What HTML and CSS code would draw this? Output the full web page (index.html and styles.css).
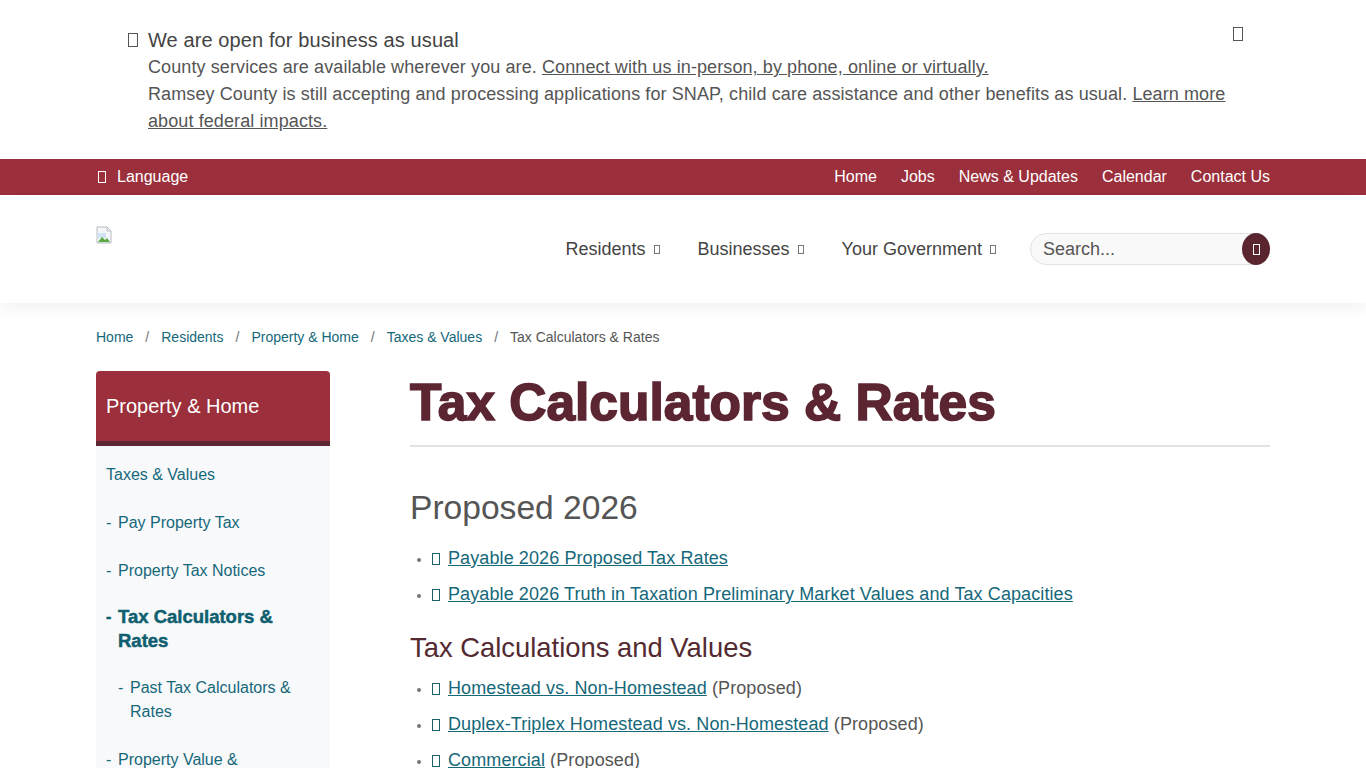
FILE: index.html
```html
<!DOCTYPE html>
<html lang="en">
<head>
  <meta charset="UTF-8">
  <meta name="viewport" content="width=device-width, initial-scale=1.0">
  <title>Tax Calculators &amp; Rates | Ramsey County</title>
  <link rel="stylesheet" href="styles.css">
</head>
<body>
  <div class="notice">
    <div class="container notice-inner">
      <span class="tofu notice-icon"></span>
      <div class="notice-body">
        <p class="notice-title">We are open for business as usual</p>
        <p>County services are available wherever you are. <a href="#">Connect with us in-person, by phone, online or virtually.</a></p>
        <p>Ramsey County is still accepting and processing applications for SNAP, child care assistance and other benefits as usual. <a href="#">Learn more about federal impacts.</a></p>
      </div>
      <button class="notice-close" type="button"><span class="tofu"></span></button>
    </div>
  </div>

  <div class="utility-bar">
    <div class="container utility-inner">
      <a class="lang" href="#"><span class="tofu"></span>Language</a>
      <nav class="utility-links">
        <a href="#">Home</a>
        <a href="#">Jobs</a>
        <a href="#">News &amp; Updates</a>
        <a href="#">Calendar</a>
        <a href="#">Contact Us</a>
      </nav>
    </div>
  </div>

  <header class="site-header">
    <div class="container header-inner">
      <a class="logo" href="#">
        <!-- broken image placeholder -->
        <svg width="16" height="18" viewBox="0 0 16 18">
          <path d="M1 1h10l4 4v12H1z" fill="#f4f6f8" stroke="#b8bcc2"/>
          <path d="M11 1v4h4" fill="none" stroke="#b8bcc2"/>
          <path d="M2 7h8v5H2z" fill="#cfe3f5"/>
          <path d="M2 16l4-5 3 3 2-2 3 4z" fill="#5aa845"/>
        </svg>
      </a>
      <nav class="main-nav">
        <a href="#">Residents <span class="tofu caret"></span></a>
        <a href="#">Businesses <span class="tofu caret"></span></a>
        <a href="#">Your Government <span class="tofu caret"></span></a>
      </nav>
      <form class="search">
        <input type="text" placeholder="Search...">
        <button type="button"><span class="tofu"></span></button>
      </form>
    </div>
  </header>

  <div class="container">
    <ol class="breadcrumb">
      <li><a href="#">Home</a></li>
      <li><a href="#">Residents</a></li>
      <li><a href="#">Property &amp; Home</a></li>
      <li><a href="#">Taxes &amp; Values</a></li>
      <li class="current">Tax Calculators &amp; Rates</li>
    </ol>

    <div class="layout">
      <aside class="sidenav">
        <h2 class="sidenav-title">Property &amp; Home</h2>
        <ul class="sidenav-list">
          <li><a href="#">Taxes &amp; Values</a></li>
          <li><a class="lvl1" href="#"><span class="dash">-</span>Pay Property Tax</a></li>
          <li><a class="lvl1" href="#"><span class="dash">-</span>Property Tax Notices</a></li>
          <li><a class="lvl1 active" href="#"><span class="dash">-</span>Tax Calculators &amp; Rates</a></li>
          <li><a class="lvl2" href="#"><span class="dash">-</span>Past Tax Calculators &amp; Rates</a></li>
          <li><a class="lvl1" href="#"><span class="dash">-</span>Property Value &amp; Classification</a></li>
        </ul>
      </aside>

      <main class="content">
        <h1>Tax Calculators &amp; Rates</h1>

        <h2>Proposed 2026</h2>
        <ul class="doc-list">
          <li><span class="tofu"></span><a href="#">Payable 2026 Proposed Tax Rates</a></li>
          <li><span class="tofu"></span><a href="#">Payable 2026 Truth in Taxation Preliminary Market Values and Tax Capacities</a></li>
        </ul>

        <h3>Tax Calculations and Values</h3>
        <ul class="doc-list">
          <li><span class="tofu"></span><a href="#">Homestead vs. Non-Homestead</a> (Proposed)</li>
          <li><span class="tofu"></span><a href="#">Duplex-Triplex Homestead vs. Non-Homestead</a> (Proposed)</li>
          <li><span class="tofu"></span><a href="#">Commercial</a> (Proposed)</li>
          <li><span class="tofu"></span><a href="#">Apartment</a> (Proposed)</li>
        </ul>
      </main>
    </div>
  </div>
</body>
</html>
```

FILE: styles.css
```css
body {
  margin: 0;
  font-family: "Liberation Sans", Arial, sans-serif;
  font-size: 18px;
  color: #444;
  background: #fff;
}
a {
  color: #15687a;
}
.container {
  max-width: 1174px;
  margin: 0 auto;
}
.tofu {
  display: inline-block;
  width: 8px;
  height: 12px;
  border: 1px solid currentColor;
  box-sizing: border-box;
}

/* notice banner */
.notice {
  padding: 27px 0 24px;
}
.notice-inner {
  display: flex;
  gap: 10px;
  padding: 0 40px 0 32px;
  position: relative;
  box-sizing: border-box;
}
.notice-icon {
  flex: 0 0 auto;
  width: 10px;
  height: 14px;
  margin-top: 6px;
  color: #555;
}
.notice-body p {
  margin: 0;
  line-height: 27px;
  color: #555;
  letter-spacing: 0.1px;
}
.notice-body .notice-title {
  font-size: 20px;
  color: #444;
}
.notice-body a {
  color: #555;
}
.notice-close {
  position: absolute;
  right: 27px;
  top: 0;
  padding: 0;
  border: 0;
  background: none;
  color: #555;
}
.notice-close .tofu {
  width: 10px;
  height: 14px;
  display: block;
}

/* red utility bar */
.utility-bar {
  background: #9b2f3b;
}
.utility-inner {
  display: flex;
  justify-content: space-between;
  align-items: center;
  height: 36px;
  font-size: 16px;
}
.utility-inner a {
  color: #fff;
  text-decoration: none;
}
.lang {
  display: flex;
  align-items: center;
  gap: 11px;
  padding-left: 2px;
}
.utility-links {
  display: flex;
  gap: 24px;
}

/* header */
.site-header {
  position: relative;
  box-shadow: 0 6px 14px rgba(0, 0, 0, 0.05);
}
.header-inner {
  display: flex;
  align-items: center;
  height: 108px;
}
.logo {
  align-self: flex-start;
  margin-top: 31px;
  line-height: 0;
}
.main-nav {
  display: flex;
  gap: 38px;
  margin-left: auto;
}
.main-nav a {
  color: #444;
  text-decoration: none;
  display: flex;
  align-items: center;
}
.caret {
  width: 6px;
  height: 9px;
  margin-left: 8px;
  color: #777;
}
.search {
  position: relative;
  width: 240px;
  margin-left: 34px;
}
.search input {
  width: 100%;
  height: 32px;
  box-sizing: border-box;
  padding: 0 34px 0 12px;
  border: 1px solid #e2e2e2;
  border-radius: 16px;
  background: #f9f9f9;
  font-family: inherit;
  font-size: 18px;
  color: #444;
}
.search input::placeholder {
  color: #555;
}
.search button {
  position: absolute;
  right: 0;
  top: 0;
  width: 28px;
  height: 32px;
  border: 0;
  border-radius: 50%;
  background: #5b2530;
  color: #fff;
  display: flex;
  align-items: center;
  justify-content: center;
  padding: 0;
}
.search button .tofu {
  width: 7px;
  height: 11px;
}

/* breadcrumb */
.breadcrumb {
  display: flex;
  list-style: none;
  margin: 24px 0;
  padding: 0;
  font-size: 14px;
  line-height: 20px;
}
.breadcrumb a {
  text-decoration: none;
}
.breadcrumb li + li::before {
  content: "/";
  color: #6c757d;
  margin: 0 12px;
}
.breadcrumb .current {
  color: #555;
}

/* two columns */
.layout {
  display: grid;
  grid-template-columns: 234px 1fr;
  column-gap: 80px;
}

/* side navigation */
.sidenav-title {
  margin: 0;
  height: 70px;
  line-height: 70px;
  padding: 0 10px;
  background: #9b2f3b;
  border-bottom: 5px solid #5c2833;
  border-radius: 4px 4px 0 0;
  color: #fff;
  font-size: 20px;
  font-weight: normal;
}
.sidenav-list {
  list-style: none;
  margin: 0;
  padding: 5px 0 0;
  background: #f8f9fa;
  min-height: 400px;
}
.sidenav-list a {
  display: flex;
  padding: 12px 10px;
  font-size: 16px;
  line-height: 24px;
  text-decoration: none;
}
.sidenav-list .dash {
  flex: 0 0 12px;
}
.sidenav-list .lvl2 {
  padding-left: 22px;
  padding-top: 11px;
}
.sidenav-list .active {
  font-weight: bold;
  font-size: 18.5px;
  color: #0f5f70;
  -webkit-text-stroke: 0.5px #0f5f70;
  padding-top: 10px;
}
.sidenav-list .active .dash {
  flex-basis: 12px;
  font-size: 16px;
}

/* page content */
.content h1 {
  margin: 0;
  padding-bottom: 12px;
  border-bottom: 2px solid #e3e3e3;
  font-size: 51.5px;
  line-height: 62px;
  color: #5b2532;
  -webkit-text-stroke: 1.6px #5b2532;
}
.content h2 {
  margin: 40px 0 17px;
  font-size: 33.6px;
  line-height: 41px;
  font-weight: normal;
  color: #555;
}
.content h3 {
  margin: 24px 0 11px;
  font-size: 27.4px;
  line-height: 32px;
  font-weight: normal;
  color: #532a31;
}
.doc-list {
  margin: 0;
  padding-left: 22px;
  color: #555;
}
.doc-list li {
  line-height: 27px;
  margin-bottom: 9px;
  letter-spacing: 0.1px;
}
.doc-list li::marker {
  color: #777;
  font-size: 14px;
}
.doc-list .tofu {
  color: #1f5f6a;
  margin-right: 8px;
  vertical-align: -1px;
}
```
